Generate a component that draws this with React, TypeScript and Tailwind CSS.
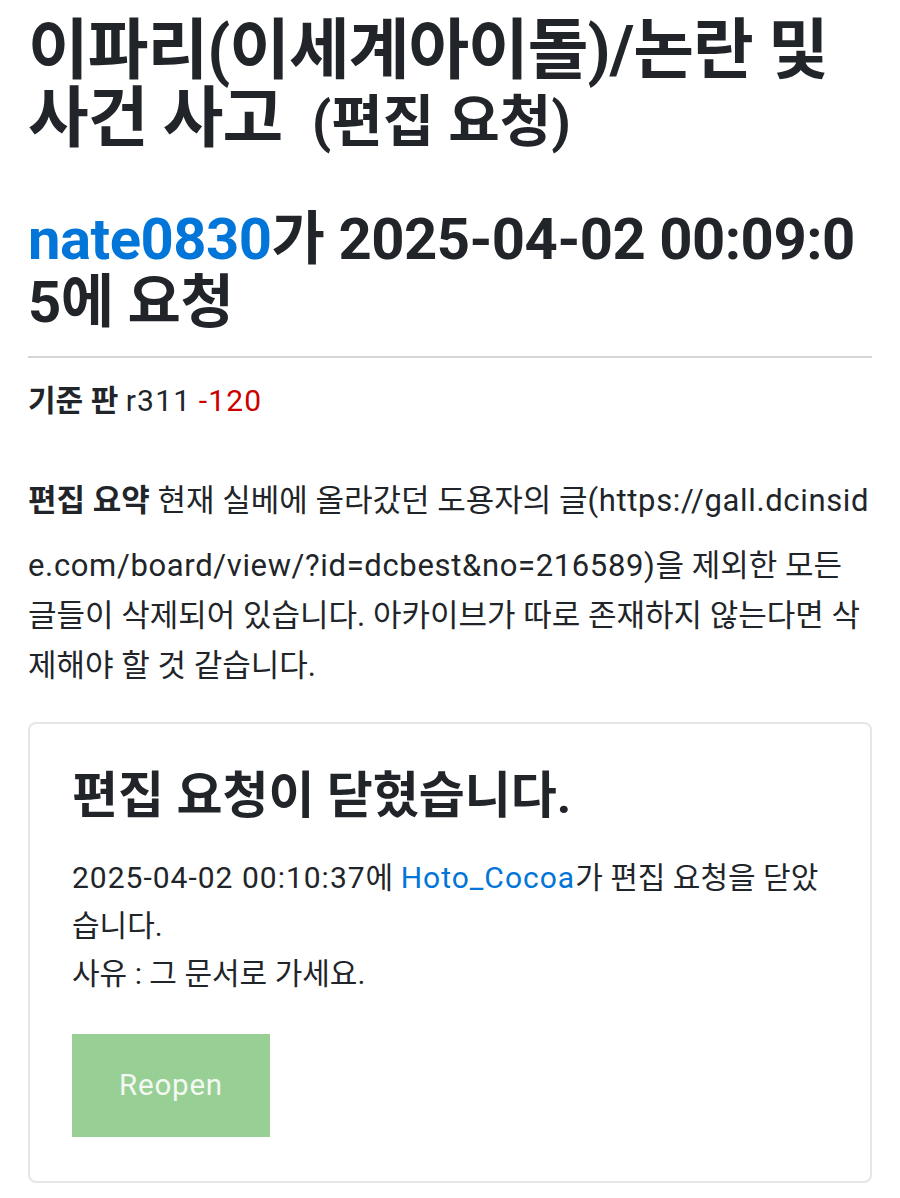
export default function App() {
  return (
    <div className="min-h-screen bg-white px-[28px] pt-[17px] pb-[12px] break-all text-[#212529] font-['Roboto','Noto_Sans_CJK_KR',sans-serif]">
      <h1 className="text-[66px] font-bold leading-[68px] tracking-[-1px]">
        이파리(이세계아이돌)/논란 및 사건 사고{' '}
        <small className="ml-[14px] text-[56px] font-bold tracking-normal">(편집 요청)</small>
      </h1>

      <h2 className="mt-[52px] text-[58px] font-bold leading-[63px] tracking-[-0.5px]">
        <a href="#" className="text-[#0275d8]">
          nate0830
        </a>
        가 2025-04-02 00:09:05에 요청
      </h2>

      <hr className="mt-[22px] border-t-2 border-[#d5d5d5]" />

      <p className="mt-[22px] text-[30px] leading-[42px]">
        <strong className="font-bold">기준 판</strong>{' '}
        <span className="tracking-[1.2px]">r311</span>{' '}
        <span className="tracking-[1.2px] text-[#c00]">-120</span>
      </p>

      <p className="mt-[39px] text-[31px] leading-[50px]">
        <strong className="font-bold leading-[80px]">편집 요약</strong> 현재 실베에 올라갔던 도용자의 글
        <span className="tracking-[0.65px]">(https://gall.dcinside.com/board/view/?id=dcbest&amp;no=216589)</span>
        을 제외한 모든 글들이 삭제되어 있습니다. 아카이브가 따로 존재하지 않는다면 삭제해야 할 것 같습니다.
      </p>

      <div className="mt-[31px] rounded-lg border-2 border-[#e6e6e6] px-[42px] pt-[44px] pb-[44px]">
        <h3 className="text-[50px] font-bold leading-[56px]">편집 요청이 닫혔습니다.</h3>
        <p className="mt-[30px] text-[30px] leading-[48px]">
          <span className="tracking-[1px]">2025-04-02 00:10:37</span>에{' '}
          <a href="#" className="tracking-[1px] text-[#0275d8]">
            Hoto_Cocoa
          </a>
          가 편집 요청을 닫았습니다.
          <br />
          사유 : 그 문서로 가세요.
        </p>
        <button
          type="button"
          className="mt-[36px] h-[103px] w-[198px] bg-[#97cf95] text-[29.5px] tracking-[0.8px] text-[#f3f9f2]"
        >
          Reopen
        </button>
      </div>
    </div>
  );
}
